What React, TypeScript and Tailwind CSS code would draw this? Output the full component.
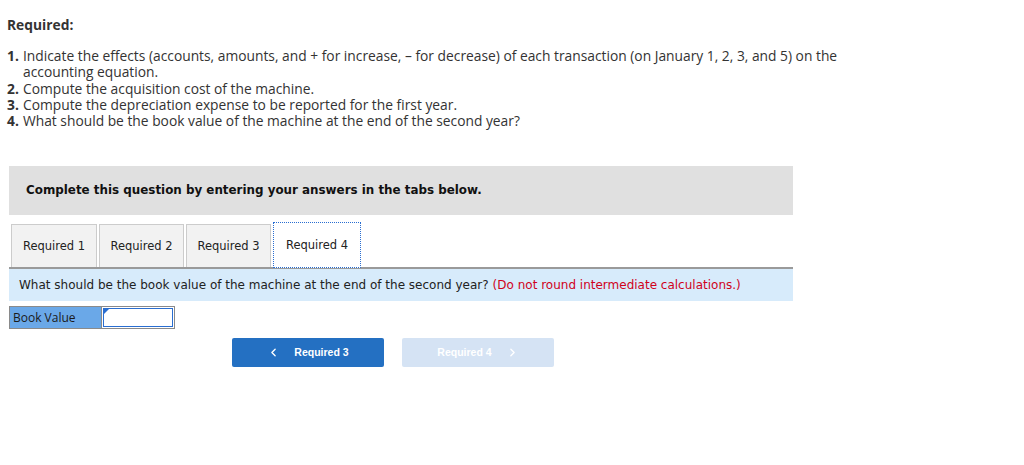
import { ChevronLeft, ChevronRight } from "lucide-react";

const items = [
  "Compute the acquisition cost of the machine.",
  "Compute the depreciation expense to be reported for the first year.",
  "What should be the book value of the machine at the end of the second year?",
];

const tabs = [
  { label: "Required 1", w: "w-[86px]" },
  { label: "Required 2", w: "w-[85px]" },
  { label: "Required 3", w: "w-[85px]" },
];

export default function App() {
  return (
    <div className="w-[1024px] h-[465px] bg-white text-[#222] overflow-hidden">
      {/* Instructions */}
      <div className="pl-[7px] pt-[17px] font-['Open_Sans',sans-serif] text-[13.8px]">
        <div className="font-bold leading-[16px] text-[#333]">Required:</div>
        <ol className="mt-[15px] leading-[16.3px] text-[#333]">
          <li className="flex">
            <span className="w-[16px] shrink-0 font-bold">1.</span>
            <span>
              Indicate the effects (accounts, amounts, and + for increase, – for decrease) of each transaction (on
              January 1, 2, 3, and 5) on the
              <br />
              accounting equation.
            </span>
          </li>
          {items.map((t, i) => (
            <li key={t} className="flex">
              <span className="w-[16px] shrink-0 font-bold">{i + 2}.</span>
              <span>{t}</span>
            </li>
          ))}
        </ol>
      </div>

      {/* Question box */}
      <div className="ml-[9px] w-[784px] mt-[37px] font-['DejaVu_Sans',Verdana,sans-serif]">
        <div className="h-[49px] bg-[#e0e0e0] flex items-center pl-[17px] text-[11.9px] font-bold text-[#111]">
          Complete this question by entering your answers in the tabs below.
        </div>

        <div className="mt-[7px] flex items-end pl-[2px] gap-[2px] text-[11.5px] text-[#222]">
          {tabs.map((t) => (
            <div
              key={t.label}
              className={`${t.w} h-[43px] bg-[#f2f2f2] border border-[#cccccc] border-b-0 flex items-center justify-center`}
            >
              {t.label}
            </div>
          ))}
          <div className="h-[46px] w-[88px] bg-white border border-dotted border-[#2a6ed1] flex items-center justify-center -mb-px relative z-10">
            Required 4
          </div>
        </div>

        <div className="h-[34px] bg-[#d7ebfb] border-t-2 border-[#9a9a9a] flex items-center pl-[10px] text-[12px] text-[#222]">
          What should be the book value of the machine at the end of the second year?
          <span className="ml-[4px] text-[#d0021b]">(Do not round intermediate calculations.)</span>
        </div>

        <div className="mt-[5px] flex font-['Open_Sans',sans-serif] text-[12px]">
          <div className="w-[92px] h-[23px] bg-[#6aa8e8] border border-[#8a8a8a] border-r-0 flex items-center pl-[3px] text-[#1a1a1a]">
            Book Value
          </div>
          <div className="w-[74px] h-[23px] border border-[#8a8a8a] p-px relative">
            <div className="h-full w-full border border-[#2a6ed1] bg-white" />
            <div className="absolute left-[2px] top-[2px] w-0 h-0 border-t-[5px] border-t-[#2a6ed1] border-r-[5px] border-r-transparent" />
          </div>
        </div>
      </div>

      {/* Nav buttons */}
      <div className="mt-[9px] ml-[232px] flex gap-[18px] font-['Liberation_Sans',Arial,sans-serif] text-[10.5px] font-bold">
        <button className="w-[152px] h-[29px] bg-[#2470c2] rounded-[2px] text-white flex items-center justify-center gap-[14px]">
          <ChevronLeft className="w-[13px] h-[13px]" strokeWidth={2.5} />
          <span>Required 3</span>
        </button>
        <button className="w-[152px] h-[29px] bg-[#d5e3f4] rounded-[2px] text-white flex items-center justify-center gap-[14px]">
          <span>Required 4</span>
          <ChevronRight className="w-[13px] h-[13px]" strokeWidth={2.5} />
        </button>
      </div>
    </div>
  );
}
